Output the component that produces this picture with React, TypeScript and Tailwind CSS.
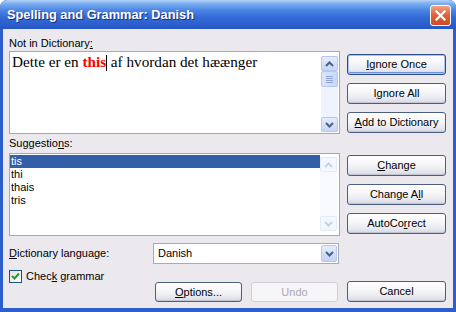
import React from "react";

function U({ children }: { children: React.ReactNode }) {
  return <span className="underline decoration-1 underline-offset-[1px]">{children}</span>;
}

function ArrowUp({ dis }: { dis?: boolean }) {
  return (
    <svg width="9" height="6" viewBox="0 0 9 6">
      <polyline points="1,5 4.5,1.5 8,5" fill="none" stroke={dis ? "#c3d1ec" : "#4d6185"} strokeWidth="2" />
    </svg>
  );
}

function ArrowDown({ dis }: { dis?: boolean }) {
  return (
    <svg width="9" height="6" viewBox="0 0 9 6">
      <polyline points="1,1 4.5,4.5 8,1" fill="none" stroke={dis ? "#c3d1ec" : "#4d6185"} strokeWidth="2" />
    </svg>
  );
}

function Btn({
  children,
  kind,
  w,
}: {
  children: React.ReactNode;
  kind: "normal" | "default" | "disabled";
  w: "wide" | "narrow";
}) {
  const size = w === "wide" ? "w-[99px] h-[21px]" : "w-[87px] h-[20px]";
  if (kind === "disabled") {
    return (
      <div className={`${size} flex items-center justify-center rounded-[3px] border border-[#d2d0d6] bg-[#f6f5f8] text-[#aca8b0]`}>
        {children}
      </div>
    );
  }
  const ring =
    kind === "default"
      ? "border-[#2a4c8c] shadow-[inset_0_0_0_1px_#a9c4f0,inset_0_-1px_0_1px_#6d94d8]"
      : "border-[#4b5f82] shadow-[inset_0_-1px_0_#c2c6d4]";
  return (
    <div
      className={`${size} ${ring} flex items-center justify-center rounded-[3px] border bg-[linear-gradient(to_bottom,#ffffff_0%,#f7f7fa_40%,#e9eaf0_75%,#d6d8e2_100%)] text-black`}
    >
      {children}
    </div>
  );
}

function ScrollBar({ disabled }: { disabled?: boolean }) {
  const btn = disabled
    ? "border-[#e3ebfa] bg-[#f4f7fd]"
    : "border-[#b6c8ee] bg-[linear-gradient(to_bottom,#e4ecfd,#c6d6f8)]";
  return (
    <div className={`flex w-[17px] flex-col ${disabled ? "bg-[#f7f9fe]" : "bg-[#eef3fd]"}`}>
      <div className={`flex h-[15px] items-center justify-center rounded-[2px] border ${btn}`}>
        <ArrowUp dis={disabled} />
      </div>
      {!disabled && (
        <div className="flex h-[16px] flex-col items-center justify-center gap-[1px] rounded-[2px] border border-[#b6c8ee] bg-[linear-gradient(to_right,#dbe6fc,#c9d8f9)]">
          <div className="h-px w-[7px] bg-[#8ea6d8]" />
          <div className="h-px w-[7px] bg-[#8ea6d8]" />
          <div className="h-px w-[7px] bg-[#8ea6d8]" />
          <div className="h-px w-[7px] bg-[#8ea6d8]" />
        </div>
      )}
      <div className="flex-1" />
      <div className={`flex h-[15px] items-center justify-center rounded-[2px] border ${btn}`}>
        <ArrowDown dis={disabled} />
      </div>
    </div>
  );
}

export default function App() {
  return (
    <div className="h-[312px] w-[456px] bg-white font-['Liberation_Sans',Arial,sans-serif] text-[11px] leading-[13px] text-black">
      <div className="flex h-[312px] w-[456px] flex-col overflow-hidden rounded-t-[7px] bg-[#2d5fcc]">
        {/* Title bar */}
        <div className="flex h-[29px] shrink-0 items-start justify-between rounded-t-[7px] bg-[linear-gradient(to_bottom,#b4d2f8_0%,#7db0f0_12%,#4c86e4_35%,#3369d6_60%,#2c5fcd_85%,#2456c2_100%)] pl-[7px] pr-[5px]">
          <div className="pt-[7px] text-[12.8px] leading-[16px] font-bold text-white [text-shadow:1px_1px_0_#152f7a]">
            Spelling and Grammar: Danish
          </div>
          <div className="mt-[5px] flex h-[21px] w-[21px] items-center justify-center rounded-[3px] border border-white bg-[linear-gradient(to_bottom,#f0a488_0%,#e2643c_45%,#cf4a22_100%)]">
            <svg width="11" height="11" viewBox="0 0 11 11">
              <path d="M1.5 1.5 L9.5 9.5 M9.5 1.5 L1.5 9.5" stroke="white" strokeWidth="2.2" strokeLinecap="square" />
            </svg>
          </div>
        </div>

        {/* Body */}
        <div className="mx-[3px] flex h-[279px] shrink-0 flex-col bg-[#ebe9ed] pl-[6px] pr-[7px] pt-[8px]">
          {/* Row 1 */}
          <div className="flex gap-[7px]">
            <div className="flex w-[331px] flex-col">
              <div className="h-[13px]">
                Not in Dictionary<U>:</U>
              </div>
              <div className="mt-px flex h-[83px] border border-[#a5a8b0] bg-white pr-px pt-[4px] pb-px">
                <div className="flex-1 pl-[2px] -mt-[3px] font-['Liberation_Serif','Times_New_Roman',serif] text-[15.2px] leading-[18px] text-black">
                  Dette er en <span className="font-bold text-[#ff0000]">this</span>
                  <span className="inline-block h-[16px] w-px bg-black align-[-4px]" /> af hvordan det hæænger
                </div>
                <ScrollBar />
              </div>
            </div>
            <div className="flex w-[99px] flex-col gap-[8px] pt-[17px]">
              <Btn kind="default" w="wide">
                <span>
                  <U>I</U>gnore Once
                </span>
              </Btn>
              <Btn kind="normal" w="wide">
                <span>
                  I<U>g</U>nore All
                </span>
              </Btn>
              <Btn kind="normal" w="wide">
                <span>
                  <U>A</U>dd to Dictionary
                </span>
              </Btn>
            </div>
          </div>

          {/* Row 2 */}
          <div className="mt-[3px] flex gap-[7px]">
            <div className="flex w-[331px] flex-col">
              <div className="h-[13px]">
                Suggestio<U>n</U>s:
              </div>
              <div className="mt-[3px] flex h-[83px] border border-[#a5a8b0] bg-white pr-[2px] pt-[3px] pb-[4px]">
                <div className="-mt-[2px] flex-1">
                  <div className="h-[13px] bg-[#335fa9] pl-px text-white">tis</div>
                  <div className="h-[13px] pl-px">thi</div>
                  <div className="h-[13px] pl-px">thais</div>
                  <div className="h-[13px] pl-px">tris</div>
                </div>
                <ScrollBar disabled />
              </div>
            </div>
            <div className="flex w-[99px] flex-col gap-[8px] pt-[18px]">
              <Btn kind="normal" w="wide">
                <span>
                  <U>C</U>hange
                </span>
              </Btn>
              <Btn kind="normal" w="wide">
                <span>
                  Change A<U>l</U>l
                </span>
              </Btn>
              <Btn kind="normal" w="wide">
                <span>
                  AutoCo<U>r</U>rect
                </span>
              </Btn>
            </div>
          </div>

          {/* Bottom section */}
          <div className="mt-[7px] flex gap-[7px]">
            <div className="flex w-[331px] flex-col">
              <div className="flex h-[21px] items-center">
                <div className="w-[144px]">
                  <U>D</U>ictionary language:
                </div>
                <div className="flex h-[21px] w-[186px] items-center border border-[#a5acb5] bg-white p-px">
                  <div className="flex-1 pl-[3px]">Danish</div>
                  <div className="flex h-[17px] w-[16px] items-center justify-center rounded-[2px] border border-[#b6c8ee] bg-[linear-gradient(to_bottom,#e4ecfd,#c2d3f7)]">
                    <ArrowDown />
                  </div>
                </div>
              </div>
              <div className="mt-[6px] flex h-[13px] items-center">
                <div className="flex h-[13px] w-[13px] items-center justify-center border border-[#1c5180] bg-[linear-gradient(135deg,#e0e0e6,#ffffff)]">
                  <svg width="9" height="9" viewBox="0 0 9 9">
                    <polyline points="1,4 3.5,6.5 8,1.5" fill="none" stroke="#21a121" strokeWidth="2" />
                  </svg>
                </div>
                <div className="pl-[4px]">
                  Chec<U>k</U> grammar
                </div>
              </div>
              <div className="-mt-px flex gap-[9px] pl-[146px]">
                <Btn kind="normal" w="narrow">
                  <span>
                    <U>O</U>ptions...
                  </span>
                </Btn>
                <Btn kind="disabled" w="narrow">
                  <span>Undo</span>
                </Btn>
              </div>
            </div>
            <div className="flex w-[99px] flex-col justify-end">
              <Btn kind="normal" w="wide">
                <span>Cancel</span>
              </Btn>
            </div>
          </div>
        </div>
      </div>
    </div>
  );
}
